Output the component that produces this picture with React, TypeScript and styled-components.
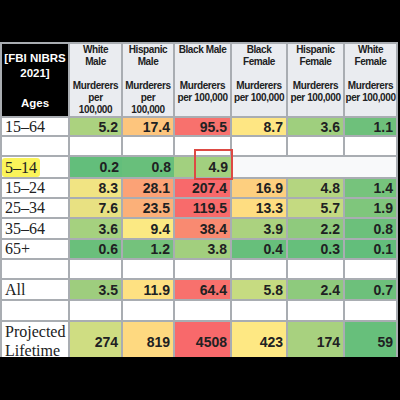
import React from "react";
import styled, { createGlobalStyle } from "styled-components";

const GlobalStyle = createGlobalStyle`
  html, body {
    margin: 0;
    padding: 0;
    background: #000;
  }
  body {
    width: 400px;
    height: 400px;
    overflow: hidden;
  }
`;

const LINE = "#a9adb2";

const Screen = styled.div`
  width: 400px;
  height: 400px;
  box-sizing: border-box;
  padding-top: 42px;
  background: #000;
`;

const Viewport = styled.div`
  width: 400px;
  height: 315px;
  overflow: hidden;
`;

const Table = styled.table`
  border-collapse: collapse;
  table-layout: fixed;
  width: 398px;
  background: #f8f9fa;
  border: 2px solid ${LINE};
  color: #202122;
`;

const Row = styled.tr<{ $h: number }>`
  height: ${(p) => p.$h}px;
`;

const CornerCell = styled.th`
  border: 2px solid ${LINE};
  background: #000;
  color: #fff;
  font-family: "Liberation Sans", Arial, sans-serif;
  font-weight: bold;
  font-size: 11.5px;
  line-height: 15px;
  text-align: center;
  vertical-align: top;
  padding: 7px 0 0;
`;

const HeadCell = styled.th`
  border: 2px solid ${LINE};
  background: #eaecf0;
  font-family: "Liberation Sans", Arial, sans-serif;
  font-weight: bold;
  font-size: 10px;
  letter-spacing: -0.4px;
  line-height: 12px;
  text-align: center;
  vertical-align: top;
  padding: 0;
  white-space: nowrap;
`;

const Title = styled.div`
  min-height: 24px;
  margin-bottom: 12px;
`;

const AgeCell = styled.td<{ $top?: boolean }>`
  border: 2px solid ${LINE};
  background: #fff;
  font-family: "Liberation Serif", "Times New Roman", serif;
  font-size: 16px;
  line-height: ${(p) => (p.$top ? 19 : 16)}px;
  padding: 0 0 0 3px;
  vertical-align: ${(p) => (p.$top ? "top" : "middle")};
  white-space: nowrap;
`;

const Highlight = styled.span`
  display: inline-block;
  margin-left: -3px;
  padding: 1px 3px;
  line-height: 17px;
  background: #fbf45a;
  border-radius: 3px;
`;

const ValueCell = styled.td<{ $bg: string; $open?: boolean }>`
  position: relative;
  border: 2px solid ${LINE};
  ${(p) => (p.$open ? "border-left: none; border-right: none;" : "")}
  background: ${(p) => p.$bg};
  font-family: "Liberation Sans", Arial, sans-serif;
  font-weight: bold;
  font-size: 14px;
  line-height: 16px;
  text-align: right;
  vertical-align: middle;
  padding: 0 3px 0 0;
`;

const BlankCell = styled.td`
  border: 2px solid ${LINE};
  background: #fff;
  padding: 0;
`;

const Marker = styled.span`
  position: absolute;
  left: 20px;
  top: -8px;
  right: -2px;
  bottom: -3px;
  border: 2px solid #dd4a44;
  pointer-events: none;
  z-index: 1;
`;

const columns = [
  { width: 53, title: ["White", "Male"], unit: ["Murderers", "per", "100,000"] },
  { width: 52, title: ["Hispanic", "Male"], unit: ["Murderers", "per", "100,000"] },
  { width: 57, title: ["Black Male"], unit: ["Murderers", "per 100,000"] },
  { width: 56, title: ["Black", "Female"], unit: ["Murderers", "per 100,000"] },
  { width: 57, title: ["Hispanic", "Female"], unit: ["Murderers", "per 100,000"] },
  { width: 53, title: ["White", "Female"], unit: ["Murderers", "per 100,000"] },
];

type Value = [string, string];

type TableRow =
  | { kind: "data"; label: string[]; h: number; values: Value[] }
  | { kind: "partial"; label: string; h: number; values: Value[] }
  | { kind: "blank"; h: number };

const rows: TableRow[] = [
  {
    kind: "data",
    label: ["15–64"],
    h: 19,
    values: [
      ["5.2", "#abd27f"],
      ["17.4", "#fdc57d"],
      ["95.5", "#f8716d"],
      ["8.7", "#fee683"],
      ["3.6", "#9fcf7e"],
      ["1.1", "#6ec07b"],
    ],
  },
  { kind: "blank", h: 20 },
  {
    kind: "partial",
    label: "5–14",
    h: 22,
    values: [
      ["0.2", "#63be7b"],
      ["0.8", "#68bf7b"],
      ["4.9", "#a2d07f"],
    ],
  },
  {
    kind: "data",
    label: ["15–24"],
    h: 20,
    values: [
      ["8.3", "#f1e483"],
      ["28.1", "#fba276"],
      ["207.4", "#f8696b"],
      ["16.9", "#fdcf7f"],
      ["4.8", "#b4d580"],
      ["1.4", "#76c37c"],
    ],
  },
  {
    kind: "data",
    label: ["25–34"],
    h: 20,
    values: [
      ["7.6", "#e8e182"],
      ["23.5", "#fbb079"],
      ["119.5", "#f86b6b"],
      ["13.3", "#fedd81"],
      ["5.7", "#c4da81"],
      ["1.9", "#7fc67c"],
    ],
  },
  {
    kind: "data",
    label: ["35–64"],
    h: 21,
    values: [
      ["3.6", "#a5d17f"],
      ["9.4", "#fbe983"],
      ["38.4", "#f98a71"],
      ["3.9", "#abd27f"],
      ["2.2", "#8fca7d"],
      ["0.8", "#6cc07b"],
    ],
  },
  {
    kind: "data",
    label: ["65+"],
    h: 20,
    values: [
      ["0.6", "#6abf7b"],
      ["1.2", "#74c27c"],
      ["3.8", "#a2cf7e"],
      ["0.4", "#67bf7b"],
      ["0.3", "#66bf7b"],
      ["0.1", "#63be7b"],
    ],
  },
  { kind: "blank", h: 20 },
  {
    kind: "data",
    label: ["All"],
    h: 21,
    values: [
      ["3.5", "#9ecd7e"],
      ["11.9", "#fee182"],
      ["64.4", "#f8716d"],
      ["5.8", "#c6db81"],
      ["2.4", "#8eca7d"],
      ["0.7", "#6dc07b"],
    ],
  },
  { kind: "blank", h: 21 },
  {
    kind: "data",
    label: ["Projected", "Lifetime"],
    h: 42,
    values: [
      ["274", "#cfdd82"],
      ["819", "#fed980"],
      ["4508", "#f8696b"],
      ["423", "#fee883"],
      ["174", "#a8d17f"],
      ["59", "#67bf7b"],
    ],
  },
];

const lines = (parts: string[]) =>
  parts.map((t, i) => (
    <React.Fragment key={i}>
      {i > 0 && <br />}
      {t}
    </React.Fragment>
  ));

export default function App() {
  return (
    <>
      <GlobalStyle />
      <Screen>
        <Viewport>
          <Table>
            <colgroup>
              <col style={{ width: 68 }} />
              {columns.map((c, i) => (
                <col key={i} style={{ width: c.width }} />
              ))}
            </colgroup>
            <thead>
              <Row $h={73}>
                <CornerCell>
                  [FBI NIBRS
                  <br />
                  2021]
                  <br />
                  <br />
                  Ages
                </CornerCell>
                {columns.map((c, i) => (
                  <HeadCell key={i}>
                    <Title>{lines(c.title)}</Title>
                    <div>{lines(c.unit)}</div>
                  </HeadCell>
                ))}
              </Row>
            </thead>
            <tbody>
              {rows.map((r, i) => {
                if (r.kind === "blank") {
                  return (
                    <Row key={i} $h={r.h}>
                      <AgeCell />
                      {columns.map((_, j) => (
                        <BlankCell key={j} />
                      ))}
                    </Row>
                  );
                }
                if (r.kind === "partial") {
                  return (
                    <Row key={i} $h={r.h}>
                      <AgeCell>
                        <Highlight>{r.label}</Highlight>
                      </AgeCell>
                      {r.values.map(([v, bg], j) => (
                        <ValueCell key={j} $bg={bg} $open>
                          {v}
                          {j === r.values.length - 1 && <Marker />}
                        </ValueCell>
                      ))}
                    </Row>
                  );
                }
                return (
                  <Row key={i} $h={r.h}>
                    <AgeCell $top={r.label.length > 1}>{lines(r.label)}</AgeCell>
                    {r.values.map(([v, bg], j) => (
                      <ValueCell key={j} $bg={bg}>
                        {v}
                      </ValueCell>
                    ))}
                  </Row>
                );
              })}
            </tbody>
          </Table>
        </Viewport>
      </Screen>
    </>
  );
}
